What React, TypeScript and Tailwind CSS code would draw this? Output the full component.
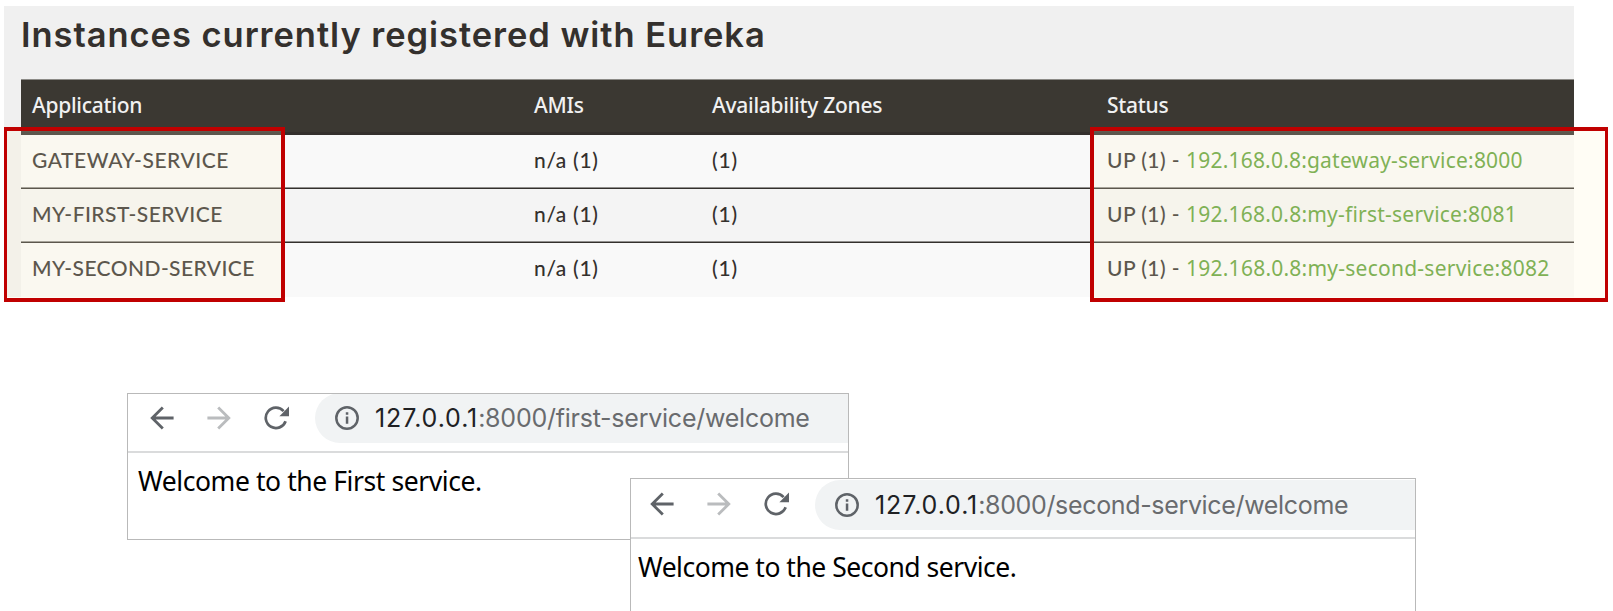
import clsx from "clsx";

const services = [
  { name: "GATEWAY-SERVICE", link: "192.168.0.8:gateway-service:8000", spacing: "tracking-[0.2px]", nameSpacing: "tracking-[0.55px]" },
  { name: "MY-FIRST-SERVICE", link: "192.168.0.8:my-first-service:8081", spacing: "tracking-[0.22px]", nameSpacing: "tracking-[0.45px]" },
  { name: "MY-SECOND-SERVICE", link: "192.168.0.8:my-second-service:8082", spacing: "tracking-[0.24px]", nameSpacing: "tracking-[0.42px]" },
];

const columns = "grid grid-cols-[502px_178px_395px_1fr] pl-[11px]";

function InstancesPanel() {
  return (
    <section className="ml-1 mt-1.5 h-[291px] w-[1570px] bg-[#f0f0f0] pl-[17px]">
      <h1 className="h-[73px] whitespace-nowrap pt-[9px] font-['Inter',sans-serif] text-[34.5px] font-semibold leading-[40px] tracking-[0.95px] text-[#34302d]">
        Instances currently registered with Eureka
      </h1>
      <div
        className={clsx(
          columns,
          "h-14 border-b-[3px] border-t border-b-[#34302d] border-t-[#8c8b87] bg-[#3b3832] pt-[11px] font-['Noto_Sans',sans-serif] text-[21px] font-medium leading-[28px] tracking-[-0.28px] text-[#f1f1f1]",
        )}
      >
        <span>Application</span>
        <span>AMIs</span>
        <span>Availability Zones</span>
        <span>Status</span>
      </div>
      {services.map((s, i) => (
        <div
          key={s.name}
          className={clsx(
            columns,
            "h-[54px] pt-[11px] font-['Lato',sans-serif] text-[21px] font-medium leading-[27px] text-[#34302d]",
            i % 2 === 0 ? "bg-[#f9f9f9]" : "bg-[#f4f4f4]",
            i < 2 && "shadow-[inset_0_-1px_#34302d,inset_0_-2px_#92908e]",
          )}
        >
          <span className={s.nameSpacing}>{s.name}</span>
          <span className="tracking-[0.7px]">n/a (1)</span>
          <span className="tracking-[0.8px]">(1)</span>
          <span className="flex whitespace-nowrap">
            <span className="w-[79px] tracking-[0.45px]">UP (1) -</span>
            <a className={clsx("font-['Noto_Sans',sans-serif] font-normal leading-[28px] text-[#5fa137]", s.spacing)}>{s.link}</a>
          </span>
        </div>
      ))}
    </section>
  );
}

function BackIcon({ className }: { className: string }) {
  return (
    <svg viewBox="0 0 24 24" className={className} fill="none" stroke="currentColor" strokeWidth="2.8">
      <path d="M23.6 12H2.2M12.8 1.4 2.2 12l10.6 10.6" />
    </svg>
  );
}

function ReloadIcon() {
  return (
    <svg viewBox="0 0 26 24" className="h-6 w-[26px] text-[#5f6368]" fill="none">
      <path d="M21.6 15.2A10.2 10.2 0 1 1 19.6 5.1" stroke="currentColor" strokeWidth="2.7" />
      <path d="M25 .6v9.6h-9.6z" fill="currentColor" />
    </svg>
  );
}

function InfoIcon() {
  return (
    <svg viewBox="0 0 24 24" className="h-6 w-6 text-[#5f6368]" fill="none">
      <circle cx="12" cy="12" r="10.7" stroke="currentColor" strokeWidth="2.5" />
      <path d="M10.8 6.3h2.5v2.4h-2.5zM10.8 10.6h2.5v7.2h-2.5z" fill="currentColor" />
    </svg>
  );
}

type BrowserProps = {
  className: string;
  toolbar: string;
  pill: string;
  path: string;
  pathSpacing: string;
  message: string;
  body: string;
};

function BrowserWindow({ className, toolbar, pill, path, pathSpacing, message, body }: BrowserProps) {
  return (
    <div className={clsx("absolute overflow-hidden border border-[#b9b9b9] bg-white", className)}>
      <div className={clsx("flex items-start border-b-2 border-[#dadbdc]", toolbar)}>
        <div className="flex w-[165px] shrink-0 pt-3">
          <BackIcon className="h-6 w-6 text-[#5f6368]" />
          <BackIcon className="ml-[33px] h-6 w-6 rotate-180 text-[#babcbe]" />
          <span className="ml-[33px]">
            <ReloadIcon />
          </span>
        </div>
        <div className={clsx("flex h-[50px] flex-1 items-center rounded-l-full bg-[#f1f3f4] pl-5", pill)}>
          <InfoIcon />
          <p className="ml-[16px] whitespace-nowrap font-['Inter',sans-serif] text-[25px] leading-[32px] text-[#202124]">
            <span className="tracking-[0.9px]">127.0.0.1</span>
            <span className={clsx("text-[#696b6e]", pathSpacing)}>{path}</span>
          </p>
        </div>
      </div>
      <p className={clsx("whitespace-nowrap font-['Noto_Sans',sans-serif] text-[26.5px] leading-[36px] text-black", body)}>
        {message}
      </p>
    </div>
  );
}

export default function App() {
  return (
    <main className="relative h-[611px] w-[1613px] overflow-hidden bg-white">
      <div className="flow-root">
        <InstancesPanel />
      </div>
      <div className="absolute left-1 top-[127px] h-[175px] w-[281px] border-4 border-l-[3px] border-[#c00000] bg-[#fff5cd]/20 bg-clip-padding" />
      <div className="absolute left-[1090px] top-[127px] h-[175px] w-[518px] border-4 border-r-[3px] border-[#c00000] bg-[#fff5cd]/20 bg-clip-padding" />
      <BrowserWindow
        className="left-[127px] top-[393px] h-[147px] w-[722px]"
        toolbar="h-[59px] pl-[22px]"
        pill="-mt-px"
        path=":8000/first-service/welcome"
        pathSpacing="tracking-[-0.24px]"
        message="Welcome to the First service."
        body="pl-[10px] pt-[10px] tracking-[-0.42px]"
      />
      <BrowserWindow
        className="left-[630px] top-[478px] h-[140px] w-[786px]"
        toolbar="h-[60px] pl-[19px] pt-px"
        pill=""
        path=":8000/second-service/welcome"
        pathSpacing="tracking-[-0.34px]"
        message="Welcome to the Second service."
        body="pl-[7px] pt-[10px] tracking-[-0.49px]"
      />
    </main>
  );
}
